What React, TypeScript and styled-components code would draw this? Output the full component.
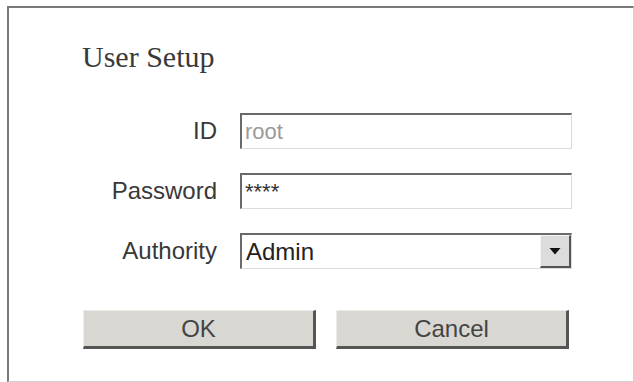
import React from 'react'
import styled, { createGlobalStyle } from 'styled-components'

const GlobalStyle = createGlobalStyle`
  html, body {
    margin: 0;
    padding: 0;
    background: #ffffff;
  }
  body {
    font-family: "Liberation Sans", Arial, sans-serif;
  }
`

const App: React.FC = () => {
  return (
    <>
      <GlobalStyle />
      <Frame>
        <Title>User Setup</Title>
        <Form>
          <Row>
            <Label>ID</Label>
            <TextField defaultValue="root" muted readOnly />
          </Row>
          <Row>
            <Label>Password</Label>
            <TextField defaultValue="****" readOnly />
          </Row>
          <Row>
            <Label>Authority</Label>
            <SelectBox>
              <SelectValue>Admin</SelectValue>
              <ArrowButton>
                <svg width="12" height="8" viewBox="0 0 12 8">
                  <path d="M0.5 1h11L6 7.5z" fill="#111" />
                </svg>
              </ArrowButton>
            </SelectBox>
          </Row>
        </Form>
        <Buttons>
          <Button>OK</Button>
          <Button>Cancel</Button>
        </Buttons>
      </Frame>
    </>
  )
}

export default App

const Frame = styled.div`
  box-sizing: border-box;
  margin: 6px 0 0 7px;
  width: 627px;
  height: 376px;
  border-top: 2px solid #7a7a7a;
  border-left: 2px solid #7a7a7a;
  border-right: 1px solid #d0d0d0;
  border-bottom: 1px solid #d0d0d0;
  display: flex;
  flex-direction: column;
  padding: 34px 0 0 73px;
`

const Title = styled.h1`
  margin: 0;
  font-family: "Liberation Serif", "Times New Roman", serif;
  font-weight: 400;
  font-size: 30px;
  line-height: 30px;
  color: #3a3a3a;
`

const Form = styled.div`
  display: flex;
  flex-direction: column;
  gap: 24px;
  margin-top: 41px;
`

const Row = styled.div`
  display: flex;
  align-items: center;
  gap: 23px;
`

const Label = styled.span`
  width: 135px;
  text-align: right;
  font-size: 24px;
  color: #383838;
`

const fieldBorder = `
  box-sizing: border-box;
  width: 332px;
  height: 36px;
  border-top: 2px solid #6a6a6a;
  border-left: 2px solid #6a6a6a;
  border-right: 1px solid #dcdcdc;
  border-bottom: 1px solid #dcdcdc;
  background: #fff;
`

const TextField = styled.input<{ muted?: boolean }>`
  ${fieldBorder}
  margin: 0;
  padding: 0 3px;
  outline: none;
  font-family: "Liberation Sans", Arial, sans-serif;
  font-size: 22px;
  color: ${p => (p.muted ? '#9a9a9a' : '#333')};
`

const SelectBox = styled.div`
  ${fieldBorder}
  display: flex;
  align-items: stretch;
`

const SelectValue = styled.span`
  flex: 1;
  display: flex;
  align-items: center;
  padding-left: 4px;
  font-size: 24px;
  color: #222;
`

const ArrowButton = styled.span`
  box-sizing: border-box;
  width: 31px;
  display: flex;
  align-items: center;
  justify-content: center;
  background: #dcdcdc;
  border-top: 1px solid #f4f4f4;
  border-left: 1px solid #f4f4f4;
  border-right: 2px solid #555;
  border-bottom: 2px solid #555;
`

const Buttons = styled.div`
  display: flex;
  gap: 20px;
  margin-top: 41px;
  padding-left: 1px;
`

const Button = styled.button`
  box-sizing: border-box;
  width: 233px;
  height: 39px;
  margin: 0;
  padding: 0;
  background: #d9d7d1;
  border-top: 1px solid #ecebe7;
  border-left: 1px solid #ecebe7;
  border-right: 3px solid #555;
  border-bottom: 3px solid #555;
  font-family: "Liberation Sans", Arial, sans-serif;
  font-size: 24px;
  color: #444;
`
